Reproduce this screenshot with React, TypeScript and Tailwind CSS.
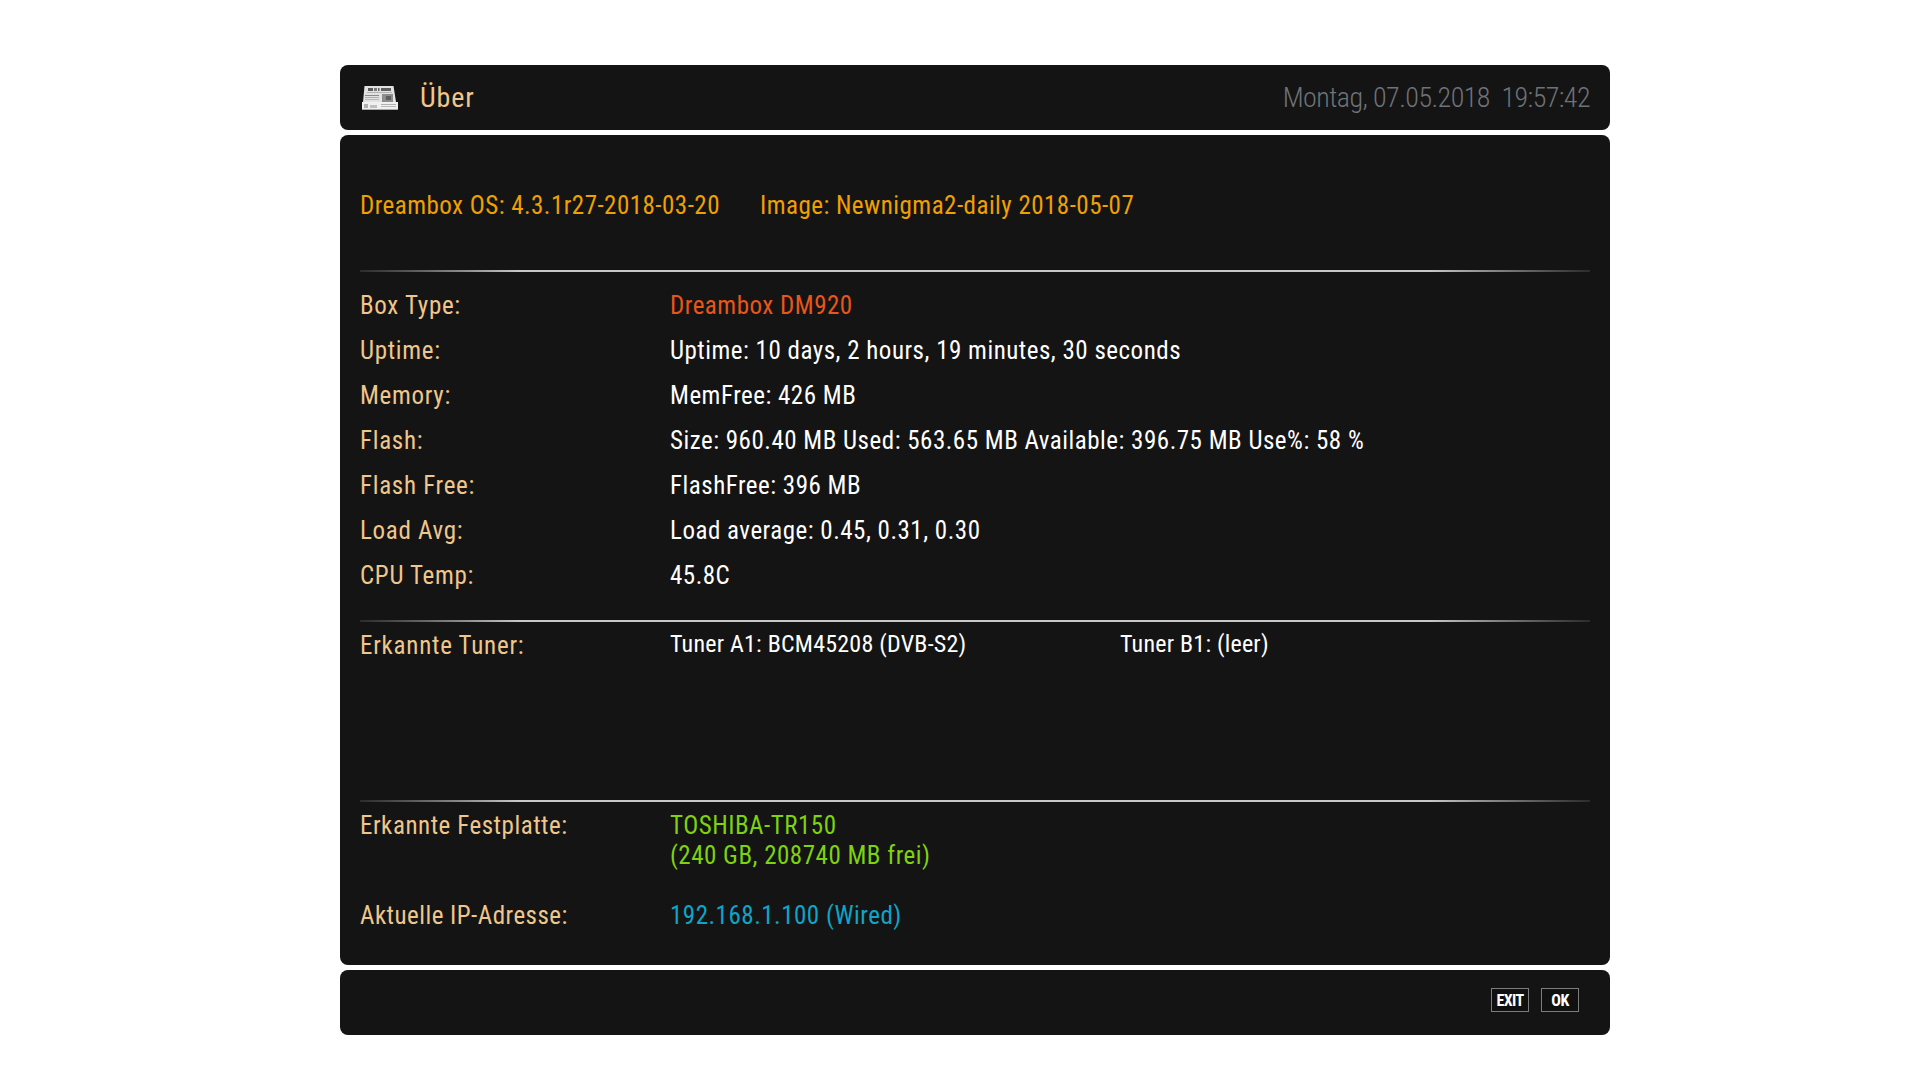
const rows: [string, string, string?][] = [
  ["Box Type:", "Dreambox DM920", "text-[#e8561a]"],
  ["Uptime:", "Uptime: 10 days, 2 hours, 19 minutes, 30 seconds"],
  ["Memory:", "MemFree: 426 MB"],
  ["Flash:", "Size: 960.40 MB Used: 563.65 MB Available: 396.75 MB Use%: 58 %"],
  ["Flash Free:", "FlashFree: 396 MB"],
  ["Load Avg:", "Load average: 0.45, 0.31, 0.30"],
  ["CPU Temp:", "45.8C"],
];

const Divider = () => (
  <div className="h-[2px] bg-gradient-to-r from-[#2c2c2c] via-[#c8c8c8] via-13% to-[#c8c8c8] to-87% relative overflow-hidden">
    <div className="absolute inset-y-0 right-0 w-[13%] bg-gradient-to-r from-[#c8c8c8] to-[#2c2c2c]" />
  </div>
);

// little newspaper, greys only
const NewsIcon = () => (
  <svg width="36" height="24" viewBox="0 0 36 24">
    <path d="M2.5 0h29l2.5 16H1z" fill="#e2e2e2" />
    <rect x="6" y="2" width="5" height="3" fill="#5c5c5c" />
    <rect x="12" y="2" width="3" height="3" fill="#7a7a7a" />
    <rect x="16" y="2" width="1.5" height="3" fill="#666" />
    <rect x="19" y="2" width="10" height="3" fill="#606060" />
    <rect x="5" y="6" width="25" height="1" fill="#b4b4b4" />
    <rect x="3" y="9" width="14" height="1" fill="#8a8a8a" />
    <rect x="3" y="11" width="14" height="1" fill="#b0b0b0" />
    <rect x="3" y="13" width="14" height="1" fill="#b8b8b8" />
    <rect x="20" y="8" width="11" height="8" fill="#8c8c8c" />
    <rect x="24" y="10" width="5" height="4" fill="#5e5e5e" />
    <path d="M0 16h36v8H0z" fill="#f0f0f0" />
    <rect x="2" y="18" width="4" height="4" fill="#b0b0b0" />
    <rect x="8" y="19" width="7" height="3" fill="#c0c0c0" />
    <rect x="19" y="18" width="15" height="1" fill="#b0b0b0" />
    <rect x="19" y="20" width="15" height="1" fill="#b8b8b8" />
    <rect x="0" y="23" width="36" height="1" fill="#a8a8a8" />
  </svg>
);

export default function App() {
  return (
    <div className="w-[1920px] h-[1080px] bg-white pt-[65px] pl-[340px] font-['Roboto',sans-serif] font-stretch-condensed">
      <div className="w-[1270px] flex flex-col gap-[5px]">
        <header className="h-[65px] rounded-lg bg-[#141414] flex items-center pl-[22px] pr-[20px]">
          <NewsIcon />
          <span className="ml-[22px] text-[28px] tracking-[0.9px] text-[#efc78c]">Über</span>
          <span className="ml-auto text-[28px] font-light tracking-[-0.55px] text-[#6f7277]">Montag, 07.05.2018&nbsp;&nbsp;19:57:42</span>
        </header>
        <main className="h-[830px] rounded-lg bg-[#141414] px-5 text-[25px] tracking-[0.5px]">
          <div className="h-[135px] pt-[51px] flex gap-10 text-[#f0a000] leading-10 tracking-[0.47px]">
            <span>Dreambox OS: 4.3.1r27-2018-03-20</span>
            <span>Image: Newnigma2-daily 2018-05-07</span>
          </div>
          <Divider />
          <div className="pt-[11px] h-[348px]">
            {rows.map(([label, value, color]) => (
              <div key={label} className="flex h-[45px] items-center">
                <span className="w-[310px] text-[#efc78c] tracking-[0.7px]">{label}</span>
                <span className={color ?? "text-white"}>{value}</span>
              </div>
            ))}
          </div>
          <Divider />
          <div className="flex h-[178px] pt-[6px] leading-9">
            <span className="w-[310px] text-[#efc78c] tracking-[0.75px]">Erkannte Tuner:</span>
            <span className="w-[450px] -mt-[2px] text-white text-[24px] tracking-[0.22px]">Tuner A1: BCM45208 (DVB-S2)</span>
            <span className="-mt-[2px] text-white text-[24px] tracking-[0.22px]">Tuner B1: (leer)</span>
          </div>
          <Divider />
          <div className="flex pt-[9px] leading-[30px]">
            <span className="w-[310px] text-[#efc78c] tracking-[0.53px]">Erkannte Festplatte:</span>
            <span className="text-[#7ed30e]">TOSHIBA-TR150<br />(240 GB, 208740 MB frei)</span>
          </div>
          <div className="flex pt-[30px] leading-[30px]">
            <span className="w-[310px] text-[#efc78c] tracking-[0.47px]">Aktuelle IP-Adresse:</span>
            <span className="text-[#0ea5c9]">192.168.1.100 (Wired)</span>
          </div>
        </main>
        <footer className="h-[65px] rounded-lg bg-[#141414] flex items-center justify-end gap-3 pr-[31px] pb-[5px]">
          <span className="w-[38px] h-6 pt-[1px] border border-[#7c7c7c] bg-[#101010] text-white text-[16px] tracking-[-0.6px] font-bold flex items-center justify-center">EXIT</span>
          <span className="w-[38px] h-6 pt-[1px] border border-[#7c7c7c] bg-[#101010] text-white text-[16px] tracking-[-0.6px] font-bold flex items-center justify-center">OK</span>
        </footer>
      </div>
    </div>
  );
}
